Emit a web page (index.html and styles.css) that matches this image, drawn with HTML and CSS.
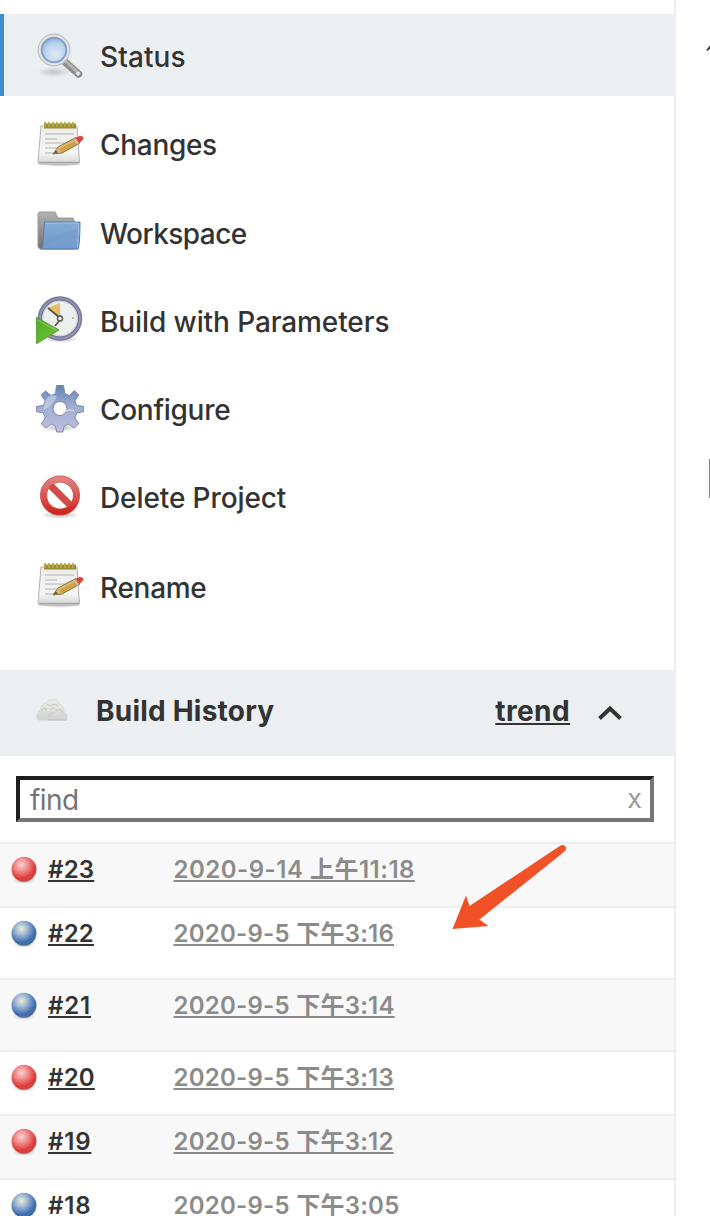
FILE: index.html
```html
<!DOCTYPE html>
<html lang="zh-CN">
<head>
<meta charset="utf-8">
<title>Build History</title>
<link rel="stylesheet" href="styles.css">
</head>
<body>
<svg class="defs" width="0" height="0">
  <defs>
    <radialGradient id="lens" cx=".55" cy=".65" r=".6"><stop offset="0" stop-color="#dde9f6"/><stop offset=".6" stop-color="#bdd3ec"/><stop offset="1" stop-color="#8db0dc"/></radialGradient>
    <radialGradient id="shade"><stop offset="0" stop-color="#555" stop-opacity=".4"/><stop offset="1" stop-color="#555" stop-opacity="0"/></radialGradient>
    <linearGradient id="paper" x2="0" y2="1"><stop offset="0" stop-color="#ececea"/><stop offset=".7" stop-color="#f5f5f5"/><stop offset="1" stop-color="#d4d4d2"/></linearGradient>
    <linearGradient id="folderback" x2="0" y2="1"><stop offset="0" stop-color="#b2b2b2"/><stop offset="1" stop-color="#707070"/></linearGradient>
    <linearGradient id="folderfront" x2="0" y2="1"><stop offset="0" stop-color="#84a9d5"/><stop offset="1" stop-color="#729bcd"/></linearGradient>
    <linearGradient id="play" x2="1" y2="1"><stop offset="0" stop-color="#50a52b"/><stop offset="1" stop-color="#74cb38"/></linearGradient>
    <linearGradient id="gearfill" x2="0" y2="1"><stop offset="0" stop-color="#6482b2"/><stop offset=".45" stop-color="#9dafd2"/><stop offset="1" stop-color="#c4bddf"/></linearGradient>
    <linearGradient id="stop" x2="0" y2="1"><stop offset="0" stop-color="#e28080"/><stop offset=".5" stop-color="#db5553"/><stop offset="1" stop-color="#cd2622"/></linearGradient>
    <radialGradient id="redball" cx=".4" cy=".32" r=".65"><stop offset="0" stop-color="#fbd3d3"/><stop offset=".45" stop-color="#ec8382"/><stop offset=".85" stop-color="#df3834"/><stop offset="1" stop-color="#c94c49"/></radialGradient>
    <radialGradient id="blueball" cx=".4" cy=".32" r=".65"><stop offset="0" stop-color="#eff0d8"/><stop offset=".45" stop-color="#90add1"/><stop offset=".85" stop-color="#3d6bad"/><stop offset="1" stop-color="#4d709f"/></radialGradient>
    <linearGradient id="cloudfill" x2="0" y2="1"><stop offset="0" stop-color="#ededeb"/><stop offset="1" stop-color="#d0d0ce"/></linearGradient>
    <symbol id="magnifier" viewBox="0 0 48 48">
      <ellipse cx="18" cy="40" rx="17" ry="5" fill="url(#shade)" opacity=".7"/>
      <path d="M29 30 42.500 42" stroke="#8e8e8c" stroke-width="7.500" stroke-linecap="round"/>
      <path d="M30 29.500 42 40.500" stroke="#b5b5b3" stroke-width="3" stroke-linecap="round"/>
      <circle cx="42" cy="41.500" r="2" fill="#e8e8e8"/>
      <circle cx="18" cy="18" r="14.500" fill="url(#lens)" stroke="#bdbfbe" stroke-width="3.800"/>
      <circle cx="18" cy="18" r="14.300" fill="none" stroke="#e3e4e2" stroke-width="2"/>
      <circle cx="18" cy="18" r="12.200" fill="none" stroke="#7c9fd1" stroke-width="1.700"/>
    </symbol>
    <symbol id="notepad" viewBox="0 0 48 48">
      <ellipse cx="24" cy="44" rx="22" ry="3" fill="url(#shade)"/>
      <path d="M5 6h36l2.500 36q0 2-2 2H4q-2 0-2-2Z" fill="url(#paper)" stroke="#b2b3b0"/>
      <path d="M3 42.500h40" stroke="#a9aaa8" stroke-width="1.600"/>
      <path d="M8 3.500h32v5H8z" fill="#988d38"/>
      <path d="M9 2v5m4-5v5m4-5v5m4-5v5m4-5v5m4-5v5m4-5v5m4-5v5" stroke="#bba946" stroke-width="1.800"/>
      <path d="M9 14h29M9 19h12M9 23h26M9 28h12M9 33h15" stroke="#c7c8c6" stroke-width="1.500"/>
      <path d="m17 34 5-7 18-9.500 4 5.500-18 10Z" fill="#d0a04a" stroke="#92703a"/>
      <path d="m22 28.500 19-9.500" stroke="#e2bc75" stroke-width="1.800"/>
      <path d="m17 34 5-6 4 4Z" fill="#d5b982"/><path d="m17 34 3-3.500 2 2Z" fill="#5c5440"/>
      <path d="m39.500 18 4-2q4-.5 4 3l-4 4Z" fill="#d84642"/><path d="m38 19 4 5" stroke="#c9bdae" stroke-width="2"/>
    </symbol>
    <symbol id="folder" viewBox="0 0 48 48">
      <path d="M3 39h40v3H4z" fill="#777" opacity=".25"/>
      <path d="M2 6q0-2 2-2h15l3 6h14q2 0 2 2v29H4Q2 40 2 38Z" fill="url(#folderback)" stroke="#999"/>
      <path d="M8.500 14H44q0 17-1.500 26-.2 1-1.500 1H5.500q2-3 2-12Z" fill="url(#folderfront)" stroke="#5580b6"/>
      <path d="M9 15.200h33.500l-1 24" fill="none" stroke="#a0bddf" stroke-width="1"/>
      <path d="M9 28Q27 27 42 20v11q-16-3-33 7Z" fill="#668fc3" opacity=".2"/>
    </symbol>
    <symbol id="buildclock" viewBox="0 0 48 48">
      <ellipse cx="25" cy="43" rx="18" ry="4" fill="url(#shade)"/>
      <circle cx="24" cy="22.500" r="20" fill="#eeeeec" stroke="#77779a" stroke-width="4.400"/>
      <circle cx="24" cy="22.500" r="20" fill="none" stroke="#9494b3" stroke-width="1.700"/>
      <circle cx="24" cy="22.500" r="17.200" fill="none" stroke="#d0d0d0" stroke-width="1"/>
      <path d="M24 22 11 12 24 7Z" fill="#e2bd64"/>
      <path d="m12 12 12 10M24 19v5l-5 6" fill="none" stroke="#555750" stroke-width="1.800"/>
      <circle cx="24" cy="22.500" r="2.500" fill="#f3f3f1" stroke="#5b5d5b" stroke-width="1.500"/>
      <circle cx="37" cy="22" r="1" fill="#aaa"/>
      <path d="M0 21 23 34 0 48Z" fill="url(#play)" stroke="#5b9d42"/><path d="M1 24 20 34" stroke="#8ccd67"/>
    </symbol>
    <symbol id="gear" viewBox="0 0 48 48">
      <ellipse cx="24" cy="43" rx="18" ry="4" fill="url(#shade)"/>
      <path fill-rule="evenodd" fill="url(#gearfill)" stroke="#7a86ac" d="M20.500.5h7l1.300 8 4.500 2 5-5 4.500 4.500-4 6 2 4.500 7 1v5l-7 1.500-2 5 4 5.500-4.500 4.500-6-4-4 2-1.500 6h-6l-1.500-6-4-2-5.500 4-4.500-4 4-6-2-5-7-1.500v-5l7-1 2-4.500-4-6L9.500 6l5.500 4.500 4.500-2ZM24 16.500a7 7 0 1 0 0 14 7 7 0 0 0 0-14Z"/>
      <path d="M8 25Q7 13 16 10l5 1Q18 20 8 25Z" fill="#d9e2f1" opacity=".5"/>
      <path d="M27 29q4-6 11-3" fill="none" stroke="#d8d2e8" stroke-width="1.500"/>
    </symbol>
    <symbol id="forbidden" viewBox="0 0 48 48">
      <ellipse cx="24" cy="42" rx="20" ry="4" fill="url(#shade)"/>
      <path d="M12 10 36 34" stroke="#d44a46" stroke-width="7"/>
      <circle cx="24" cy="22.500" r="16.500" fill="none" stroke="#ce5550" stroke-width="7"/>
      <circle cx="24" cy="22.500" r="16.500" fill="none" stroke="url(#stop)" stroke-width="5.600"/>
    </symbol>
    <symbol id="red" viewBox="0 0 32 32"><ellipse cx="16" cy="26.500" rx="11" ry="3.500" fill="url(#shade)"/><circle cx="16" cy="15.300" r="12.500" fill="url(#redball)"/></symbol>
    <symbol id="blue" viewBox="0 0 32 32"><ellipse cx="16" cy="26.500" rx="11" ry="3.500" fill="url(#shade)"/><circle cx="16" cy="15.300" r="12.500" fill="url(#blueball)"/></symbol>
  </defs>
</svg>
<div class="page">
  <aside class="side">
    <nav class="tasks">
      <a class="task active"><svg class="icon"><use href="#magnifier"/></svg><span>Status</span></a>
      <a class="task tight"><svg class="icon"><use href="#notepad"/></svg><span>Changes</span></a>
      <a class="task low tighter"><svg class="icon"><use href="#folder"/></svg><span>Workspace</span></a>
      <a class="task low"><svg class="icon"><use href="#buildclock"/></svg><span>Build with Parameters</span></a>
      <a class="task tight"><svg class="icon"><use href="#gear"/></svg><span>Configure</span></a>
      <a class="task"><svg class="icon"><use href="#forbidden"/></svg><span>Delete Project</span></a>
      <a class="task lowest tight"><svg class="icon"><use href="#notepad"/></svg><span>Rename</span></a>
    </nav>
    <header class="history-head">
      <svg class="cloud" viewBox="0 0 32 24"><path d="M1 21Q0 14 5 11q0-5 5-6 2-4 7-3 5-1 6 4 5 1 5 8 4 3 3 8H12Q3 23 1 21Z" fill="url(#cloudfill)" stroke="#d6d7d5"/><path d="M5 12q3-3 6 0m0-6q2 3 5 1 4-2 6 1m-8 4q4-4 7 1m-8 6q1-5 5-4m3-3q4-2 6 3" fill="none" stroke="#c6c7c5"/><path d="M12 22h18" stroke="#c3c4c2"/></svg>
      <h2 class="history-title">Build History</h2>
      <a class="trend">trend</a>
      <svg class="chevron" viewBox="0 0 24 16"><path d="m1.500 13.500 10.500-10 10.500 10" fill="none" stroke="#333" stroke-width="3.900"/></svg>
    </header>
    <div class="search"><span class="find">find</span><span class="clear">x</span></div>
    <div class="builds">
      <div class="build odd"><svg class="ball"><use href="#red"/></svg><a class="number">#23</a><a class="date morning">2020-9-14 上午11:18</a></div>
      <div class="build tall"><svg class="ball"><use href="#blue"/></svg><a class="number">#22</a><a class="date">2020-9-5 下午3:16</a></div>
      <div class="build odd tall"><svg class="ball"><use href="#blue"/></svg><a class="number narrow">#21</a><a class="date">2020-9-5 下午3:14</a></div>
      <div class="build"><svg class="ball"><use href="#red"/></svg><a class="number">#20</a><a class="date">2020-9-5 下午3:13</a></div>
      <div class="build odd"><svg class="ball"><use href="#red"/></svg><a class="number narrow">#19</a><a class="date">2020-9-5 下午3:12</a></div>
      <div class="build"><svg class="ball"><use href="#blue"/></svg><a class="number narrow">#18</a><a class="date">2020-9-5 下午3:05</a></div>
    </div>
  </aside>
  <main class="content">
    <svg class="stroke" viewBox="0 0 4 8"><path d="M1 6.500 5 1.500" stroke="#333" stroke-width="1.800"/></svg>
    <div class="panel-edge"></div>
  </main>
  <svg class="arrow" viewBox="0 0 120 90"><path d="M2.500 89 16 55.500 19.500 66 110.500 5.500Q114 4 115.500 6.500 117 9 114.500 11.500L29.500 79.500 38.500 86Z" fill="#f15127"/></svg>
</div>
</body>
</html>
```
FILE: styles.css
```css
* { box-sizing: border-box; }
body { margin: 0; background: #fff; color: #333; font-family: Inter, "Noto Sans CJK SC", sans-serif; }
.defs { position: absolute; }
.page { position: relative; display: flex; width: 710px; height: 1216px; overflow: hidden; }
.side { flex: none; width: 676px; height: 1216px; border-right: 2px solid #ebeff2; }
.tasks { display: flex; flex-direction: column; gap: 6.330px; height: 670px; padding-top: 14px; }
.task { display: flex; align-items: center; flex: none; gap: 16px; height: 82px; padding-left: 36px; font-size: 28px; line-height: 40px; font-weight: 500; letter-spacing: -.1px; }
.task span { padding-top: 3px; }
.task.tight { letter-spacing: -.3px; }
.task.tighter { letter-spacing: -.55px; }
.task.active { padding-left: 32px; border-left: 4px solid #3b8bd0; background: #ebeff2; letter-spacing: .1px; }
.task.low span { padding-top: 5px; }
.task.lowest span { padding-top: 7px; }
.icon { flex: none; width: 48px; height: 48px; margin-top: 1px; filter: blur(.45px); }
.history-head { display: flex; align-items: center; height: 86px; padding: 0 52px 6px 36px; margin-right: -2px; background: #ebeff2; }
.cloud { width: 32px; height: 24px; filter: blur(.45px); }
.history-title { margin: 0 auto 0 28px; padding-top: 1px; font-size: 28px; font-weight: 700; line-height: 40px; letter-spacing: .22px; }
.trend { padding-top: 1px; font-size: 28px; font-weight: 700; line-height: 40px; letter-spacing: .4px; }
.trend, .number, .date { text-decoration: underline 2px; text-underline-offset: 2px; text-decoration-skip-ink: none; }
.chevron { width: 24px; height: 16px; margin: 6px 2px 0 28px; }
.search { display: flex; align-items: center; justify-content: space-between; width: 638px; height: 46px; margin: 20px 0 20px 16px; padding: 0 8px 0 10px; border: 4px solid; border-color: #1e1e1e #767676 #767676 #1e1e1e; }
.find { padding-top: 2px; font-size: 28px; line-height: 38px; color: #757575; letter-spacing: -.6px; }
.clear { font-size: 27px; line-height: 36px; color: #999; }
.build { display: flex; align-items: flex-start; height: 64px; padding: 10px 0 0 8px; border-top: 2px solid #ebeff2; font-size: 24px; font-weight: 600; line-height: 32px; }
.tall { height: 72px; }
.odd { background: #f8f8f8; }
.ball { flex: none; width: 32px; height: 32px; margin-right: 8px; filter: blur(.4px); }
.number { letter-spacing: .2px; }
.number.narrow { letter-spacing: .8px; }
.date { margin-left: auto; width: 500.500px; font-family: Inter, "Noto Sans CJK SC", sans-serif; font-weight: 600; color: #8b8b8b; letter-spacing: .25px; }
.date.morning { letter-spacing: .5px; }
.content { flex: 1; display: flex; flex-direction: column; align-items: flex-end; padding-top: 44px; }
.stroke { width: 4px; height: 8px; }
.panel-edge { width: 1px; height: 39px; margin-top: 407px; background: #888; }
.arrow { position: absolute; left: 450px; top: 840px; width: 120px; height: 90px; }
```
